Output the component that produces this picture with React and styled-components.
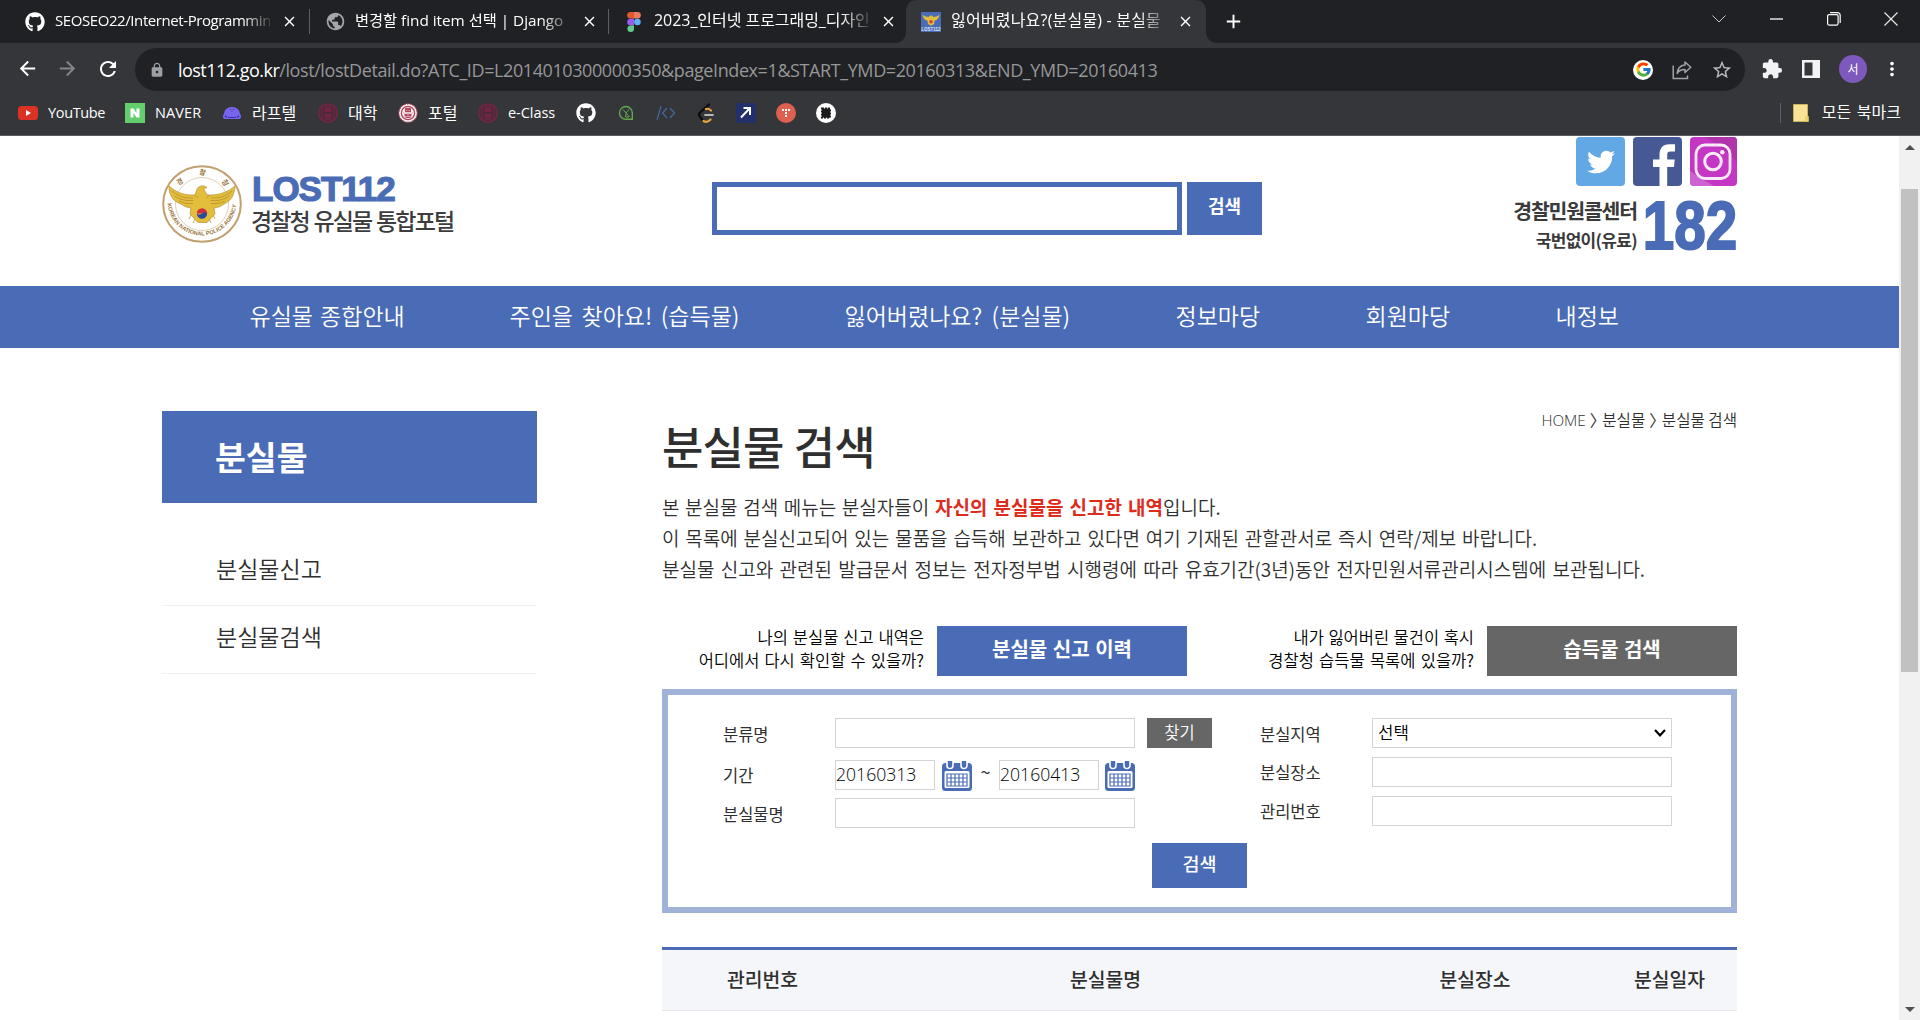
import React from 'react';
import styled, { createGlobalStyle } from 'styled-components';
import { FaGithub, FaTwitter } from 'react-icons/fa';
import { FcGoogle } from 'react-icons/fc';
import { MdArrowBack, MdArrowForward, MdRefresh, MdLock, MdStarBorder, MdExtension, MdMoreVert, MdPublic, MdClose, MdAdd } from 'react-icons/md';

const BLUE = '#4a6bb5';

const Global = createGlobalStyle`
  * { box-sizing: border-box; }
  body { margin: 0; background: #fff; overflow: hidden; font-family: "Noto Sans CJK KR", "Noto Sans", sans-serif; }
  svg { display: block; flex: none; }
`;

const Screen = styled.div`
  width: 1920px;
  height: 1020px;
  overflow: hidden;
  display: flex;
  flex-direction: column;
`;

const Text = styled.span`
  display: block;
  white-space: nowrap;
  flex: none;
  font-size: ${(p) => p.$size}px;
  font-weight: ${(p) => p.$weight || 400};
  letter-spacing: ${(p) => p.$track || 0}px;
  word-spacing: ${(p) => p.$word || 0}px;
  color: ${(p) => p.$color || 'inherit'};
  line-height: ${(p) => p.$line || 'normal'};
`;

const LatinText = styled(Text)`
  font-family: "Open Sans", "Noto Sans", sans-serif;
`;

/* ---------- browser chrome ---------- */

const Chrome = styled.header`
  height: 136px;
  flex: none;
  background: #35363a;
  border-bottom: 1px solid #5d5c60;
  color: #fff;
  font-family: "Open Sans", "Noto Sans CJK KR", sans-serif;
`;

const TabStrip = styled.div`
  height: 43px;
  background: #202124;
  display: flex;
  align-items: stretch;
  padding-left: 10px;
`;

const Tab = styled.div`
  width: ${(p) => p.$width}px;
  display: flex;
  align-items: center;
  padding-left: 15px;
  position: relative;
  flex: none;
  background: ${(p) => (p.$active ? '#35363a' : 'transparent')};
  border-radius: 10px 10px 0 0;
`;

const TabCurve = styled.i`
  position: absolute;
  bottom: 0;
  ${(p) => p.$side}: -10px;
  width: 10px;
  height: 10px;
  background: radial-gradient(circle at ${(p) => (p.$side === 'left' ? '0 0' : '100% 0')}, transparent 9.5px, #35363a 10px);
`;

const TabIcon = styled.div`
  width: 20px;
  display: flex;
  justify-content: center;
  flex: none;
`;

const TabTitle = styled.div`
  width: 215px;
  margin: 0 0 1px 10px;
  overflow: hidden;
  mask-image: linear-gradient(90deg, #000 calc(100% - 28px), rgba(0, 0, 0, 0.15) 100%);
  height: 28px;
`;

const TabClose = styled.div`
  margin-left: 11px;
`;

const TabRule = styled.i`
  width: 1px;
  height: 25px;
  margin-top: 9px;
  background: #5f6064;
  flex: none;
`;

const NewTab = styled.div`
  display: flex;
  align-items: center;
  margin-left: 16px;
`;

const WindowButtons = styled.div`
  margin-left: auto;
  display: flex;
  padding-bottom: 6px;
`;

const WindowButton = styled.div`
  width: 57.3px;
  display: flex;
  align-items: center;
  justify-content: center;
`;

const Toolbar = styled.div`
  height: 53px;
  padding: 5px 0;
  display: flex;
  align-items: center;
`;

const NavButtons = styled.div`
  width: 135px;
  padding: 0 0 2px 16px;
  display: flex;
  gap: 17px;
  flex: none;
`;

const Omnibox = styled.div`
  width: 1610px;
  height: 43px;
  border-radius: 22px;
  background: #202124;
  display: flex;
  align-items: center;
  padding: 0 12px 0 14px;
  flex: none;
`;

const Url = styled.div`
  margin-left: 13px;
  display: flex;
  flex: 1;
`;

const OmniActions = styled.div`
  display: flex;
  align-items: center;
  gap: 19px;
`;

const RoundBadge = styled.div`
  width: 20px;
  height: 20px;
  border-radius: 50%;
  display: flex;
  align-items: center;
  justify-content: center;
  background: #fff;
`;

const Actions = styled.div`
  display: flex;
  align-items: center;
  padding: 0 0 2px 16px;
  gap: 19px;
`;

const Avatar = styled.div`
  width: 28px;
  height: 28px;
  border-radius: 50%;
  background: #7d59bd;
  display: flex;
  align-items: center;
  justify-content: center;
  margin-right: -5px;
`;

const Bookmarks = styled.div`
  height: 34px;
  display: flex;
  align-items: center;
  padding: 0 19px 0 18px;
  gap: 20px;
`;

const Bookmark = styled.div`
  display: flex;
  align-items: center;
  gap: 10px;
  flex: none;
`;

const BookmarkIcon = styled.div`
  width: 20px;
  height: 20px;
  display: flex;
  align-items: center;
  justify-content: center;
  flex: none;
`;

const BookmarkLabel = styled.div`
  width: ${(p) => p.$width}px;
  flex: none;
  padding-bottom: 2px;
`;

const AllBookmarks = styled.div`
  margin-left: auto;
  display: flex;
  align-items: center;
  height: 20px;
  padding-left: 12px;
  border-left: 1px solid #606165;
  gap: 13px;
`;

const AllBookmarksLabel = styled.div`
  padding-bottom: 4px;
`;

/* ---------- page ---------- */

const Viewport = styled.div`
  flex: 1;
  display: flex;
  min-height: 0;
`;

const Page = styled.div`
  width: 1899px;
  flex: none;
  background: #fff;
  color: #2f2f2f;
`;

const Masthead = styled.div`
  height: 150px;
  padding: 0 162px;
  display: flex;
  align-items: flex-start;
`;

const Logo = styled.div`
  width: 550px;
  padding-top: 29px;
  display: flex;
  gap: 9px;
`;

const LogoWords = styled.div`
  padding-top: 5px;
`;

const LogoTitle = styled(Text)`
  font-family: "Liberation Sans", sans-serif;
  height: 33px;
  margin-left: 1px;
  -webkit-text-stroke: 1.2px ${BLUE};
`;

const GlobalSearch = styled.div`
  padding-top: 46px;
  display: flex;
  gap: 5px;
`;

const SearchField = styled.input`
  width: 470px;
  height: 53px;
  border: 5px solid ${BLUE};
  background: #fff;
`;

const Button = styled.button`
  width: ${(p) => p.$width}px;
  height: ${(p) => p.$height}px;
  background: ${(p) => p.$bg || BLUE};
  padding: 0 0 ${(p) => p.$lift || 0}px;
  border: 0;
  color: #fff;
  font-family: inherit;
  display: flex;
  align-items: center;
  justify-content: center;
  flex: none;
`;

const Contact = styled.div`
  margin-left: auto;
  display: flex;
  flex-direction: column;
  align-items: flex-end;
`;

const Socials = styled.div`
  display: flex;
  gap: 8px;
  padding-top: 1px;
`;

const Social = styled.div`
  width: ${(p) => p.$width || 49}px;
  height: 49px;
  border-radius: 4px;
  background: ${(p) => p.$bg};
  display: flex;
  overflow: hidden;
  align-items: center;
  justify-content: center;
`;

const Hotline = styled.div`
  display: flex;
  margin-top: 8px;
`;

const HotlineText = styled.div`
  display: flex;
  flex-direction: column;
  align-items: flex-end;
  padding-top: 1px;
`;

const HotlineNumber = styled(Text)`
  font-family: "Liberation Sans", sans-serif;
  margin-left: -15px;
  transform: scale(0.82, 1);
  transform-origin: right;
  -webkit-text-stroke: 2px ${BLUE};
`;

const MainNav = styled.nav`
  height: 62px;
  background: ${BLUE};
  color: #fff;
  display: flex;
  align-items: center;
  gap: 106px;
  padding: 0 0 5px 249.5px;
`;

const NavItem = styled.div`
  width: ${(p) => p.$width}px;
  flex: none;
`;

const Body = styled.div`
  display: flex;
  padding: 63px 162px 0;
`;

const Sidebar = styled.aside`
  width: 375px;
  margin-right: 125px;
  flex: none;
`;

const SideTitle = styled.div`
  height: 92px;
  background: ${BLUE};
  color: #fff;
  padding: 0 0 3px 53px;
  display: flex;
  align-items: center;
  margin-bottom: 35px;
`;

const SideItem = styled.div`
  height: 68px;
  padding: 0 0 7px 54px;
  display: flex;
  align-items: center;
  border-bottom: 1px solid #f0f0f0;
`;

const Main = styled.main`
  width: 1075px;
  flex: none;
`;

const TitleRow = styled.div`
  height: 80px;
  display: flex;
  justify-content: space-between;
  align-items: flex-start;
`;

const Crumbs = styled.div`
  display: flex;
`;

const CrumbMark = styled.div`
  width: 16.500px;
  padding-left: 4px;
  flex: none;
`;

const Intro = styled.div`
  height: 134px;
`;

const IntroLine = styled.div`
  display: flex;
  height: 31px;
`;

const Shortcuts = styled.div`
  height: 50px;
  display: flex;
  justify-content: space-between;
  margin: 1px 0 13px;
`;

const Shortcut = styled.div`
  display: flex;
  gap: 13px;
  width: 525px;
  justify-content: flex-end;
`;

const ShortcutHint = styled.div`
  display: flex;
  flex-direction: column;
  align-items: flex-end;
  color: #000;
`;

const SearchBox = styled.section`
  height: 224px;
  border: 6px solid #a1b2d8;
  padding-top: 23px;
  display: flex;
  flex-direction: column;
  align-items: center;
  margin-bottom: 34px;
`;

const FormColumns = styled.div`
  width: 100%;
  display: flex;
  height: 110px;
  margin-bottom: 15px;
  padding-left: 55px;
`;

const FormColumn = styled.div`
  width: ${(p) => p.$width}px;
  display: flex;
  flex-direction: column;
  gap: ${(p) => p.$gap}px;
`;

const Field = styled.div`
  display: flex;
  height: 30px;
  align-items: center;
  margin-top: ${(p) => p.$offset || 0}px;
`;

const FieldLabel = styled.div`
  width: 112px;
  flex: none;
  padding-top: ${(p) => p.$drop || 0}px;
`;

const Input = styled.div`
  width: ${(p) => p.$width || 300}px;
  height: 30px;
  border: 1px solid #d4d4d4;
  background: #fff;
  color: #000;
  display: flex;
  align-items: center;
  justify-content: space-between;
  padding: 0 ${(p) => p.$pad || 0}px 3px;
  flex: none;
`;

const CalendarButton = styled.div`
  padding-top: 2px;
  margin-left: ${(p) => p.$gap}px;
`;

const Gap = styled.i`
  width: ${(p) => p.$width}px;
  flex: none;
`;

const Tilde = styled.div`
  width: 27px;
  display: flex;
  justify-content: center;
  padding-bottom: 9px;
  flex: none;
`;

const TableHead = styled.div`
  height: 64px;
  display: grid;
  grid-template-columns: 201px 485px 254px 135px;
  align-items: center;
  justify-items: center;
  padding-bottom: 2px;
  background: #f5f6fa;
  border-top: 3px solid ${BLUE};
  border-bottom: 1px solid #e7e8ec;
`;

const Scrollbar = styled.div`
  width: 21px;
  background: #f1f1f1;
  display: flex;
  flex-direction: column;
  align-items: center;
  justify-content: space-between;
`;

const ScrollTop = styled.div`
  display: flex;
  flex-direction: column;
  align-items: center;
`;

const ScrollArrow = styled.div`
  height: 22px;
  display: flex;
  align-items: center;
`;

const ScrollThumb = styled.div`
  margin-top: 31px;
  width: 17px;
  height: 483px;
  background: #c1c1c1;
`;

/* ---------- drawings ---------- */

const FigmaMark = () => (
  <svg width="14" height="20" viewBox="0 0 14 20">
    <path d="M3.500 0H7v6.600H3.500a3.300 3.300 0 0 1 0-6.600z" fill="#e2592f" />
    <path d="M7 0h3.500a3.300 3.300 0 0 1 0 6.600H7z" fill="#ec7b62" />
    <path d="M3.500 6.700H7v6.600H3.500a3.300 3.300 0 0 1 0-6.600z" fill="#9a5cf0" />
    <circle cx="10.400" cy="10" r="3.300" fill="#5fb0f5" />
    <path d="M3.500 13.400H7v3.300a3.300 3.300 0 1 1-3.500-3.300z" fill="#64c98c" />
  </svg>
);

const LostFavicon = () => (
  <svg width="20" height="20" viewBox="0 0 20 20">
    <rect width="20" height="20" fill="#4a6bb5" />
    <path d="M1.500 2.800c2 1.500 4 2.200 6.200 2.200L9 3.500h2L12.300 5c2.200 0 4.200-.7 6.200-2.200-.3 3-2 5.300-5 6L13 12l-3 1.800L7 12l-.5-3.200c-3-.7-4.700-3-5-6z" fill="#e2bd3c" />
    <circle cx="10" cy="9.800" r="1.700" fill="#d13b3b" />
    <text x="10" y="18.600" fontSize="4.500" textAnchor="middle" fill="#dfe6f5" fontWeight="700" fontFamily="Liberation Sans">LOST112</text>
  </svg>
);

const Seal = ({ light }) => {
  const ink = light ? '#b0455c' : '#7d2344';
  const paper = light ? '#f8f1f3' : '#4b2a3a';
  return (
    <svg width="20" height="20" viewBox="0 0 20 20">
      <circle cx="10" cy="10" r="9.200" fill={paper} stroke={ink} strokeWidth="1.200" strokeDasharray={light ? '1.800 1.200' : 'none'} />
      <circle cx="10" cy="10" r="6.600" fill="none" stroke={ink} strokeWidth={light ? 1.3 : 0.8} />
      <path d="M7 5.500c1-1.200 1.500-.5 3-.5s2-.7 3 .5V9H7zM6.500 11h7v2.500h-7z" fill={ink} />
      <path d="M8 7.500h1.500M10.500 7.500H12M10 9v6M5 10h10" stroke={light ? '#d9a5b0' : '#4b2a3a'} strokeWidth="0.900" />
      <path d="M7.500 14.500h5" stroke={ink} strokeWidth="1" />
    </svg>
  );
};

const Emblem = () => (
  <svg width="80" height="78" viewBox="0 0 80 78">
    <defs>
      <path id="lower" d="M5.500 36A34.500 34.500 0 0 0 74.500 36" />
      <path id="upper" d="M12 39A28 28 0 0 1 68 39" />
    </defs>
    <ellipse cx="40" cy="39" rx="38.800" ry="37.800" fill="#fff" stroke="#c0a070" strokeWidth="2" />
    <circle cx="40" cy="39" r="26.500" fill="none" stroke="#ddcbae" strokeWidth="0.900" />
    <text fontSize="5.600" fontWeight="700" fill="#9a753c" fontFamily="Liberation Sans">
      <textPath href="#lower" startOffset="2.500">KOREAN NATIONAL POLICE AGENCY</textPath>
    </text>
    <text fontSize="7" fontWeight="700" fill="#9a753c" fontFamily="Noto Sans CJK KR" letterSpacing="16">
      <textPath href="#upper" startOffset="18">경찰청</textPath>
    </text>
    <path d="M7 21c8 7 16 9.500 26 9l2-6c2-3.500 7-4 10-1.500l-3.500 1.200 3.500 6.300c10 .5 20-2 28-9-.5 9-4 15-11 18-3 2.500-6 3.500-10 4l1 6-8 8.500h-9l-8-8.500 1-6c-4-.5-7-1.500-10-4C10.500 36 7 30 7 21z" fill="#e3be3d" stroke="#b98f2e" strokeWidth="0.700" />
    <path d="M10 26c7 6 14 7.500 21 7M12.500 31c6 4 12 5 19 4.500M17 36c5 2.500 9 3 14 2.500M70 26c-7 6-14 7.500-21 7M67.500 31c-6 4-12 5-19 4.500M63 36c-5 2.500-9 3-14 2.500M32 30l4 3M48 30l-4 3" fill="none" stroke="#bb9232" strokeWidth="0.900" />
    <path d="M29 50l-2 4M33 54l-2 4M51 50l2 4M47 54l2 4" stroke="#bb9232" strokeWidth="0.800" />
    <path d="M34.800 48.500a5.200 5.200 0 0 1 10.400 0z" fill="#cf2f3c" />
    <path d="M34.800 48.500a5.200 5.200 0 0 0 10.400 0c-2-2-3.500-1-5.200 0s-3.500 1.500-5.200 0z" fill="#2c4a9c" />
  </svg>
);

const Instagram = () => (
  <svg width="47" height="49" viewBox="0 0 47 49">
    <path d="M0 34c8 6 16 10 24 15H0z" fill="#cf62d2" />
    <path d="M14 0h33v26C38 14 26 6 14 0z" fill="#b234ab" />
    <rect x="6" y="8" width="34" height="33.500" rx="9" fill="none" stroke="#fbeafa" strokeWidth="2.800" />
    <circle cx="23" cy="24.500" r="8.300" fill="none" stroke="#fbeafa" strokeWidth="3" />
    <circle cx="32.300" cy="15.200" r="2.200" fill="#fbeafa" />
  </svg>
);

const Facebook = () => (
  <svg width="48" height="49" viewBox="0 0 48 49">
    <path d="M25.500 49V30H19v-7.500h6.500V18c0-7 3.500-10.800 9.500-10.800h6v7.300h-4.500c-2.500 0-3.300 1-3.300 3.500v4.500h7.500L40 30h-6.800v19z" fill="#fff" />
  </svg>
);

const Calendar = () => (
  <svg width="30" height="30" viewBox="0 0 30 30">
    <rect y="2" width="30" height="28" rx="3.500" fill="#4a6bb5" />
    <path d="M5 0v4.500a3 3 0 0 0 6 0V0M19 0v4.500a3 3 0 0 0 6 0V0" fill="#4a6bb5" stroke="#fff" strokeWidth="1.600" />
    <path d="M8 0v5M22 0v5" stroke="#4a6bb5" strokeWidth="3.200" strokeLinecap="round" />
    <rect x="2.500" y="10" width="25" height="17" rx="1.500" fill="#fff" />
    <path d="M5 13h20v12H5zM5 17h20M5 21h20M9 13v12M13 13v12M17 13v12M21 13v12" fill="none" stroke="#4a6bb5" strokeWidth="1.200" />
  </svg>
);

const ShareIcon = () => (
  <svg width="20" height="20" viewBox="0 0 20 20" fill="none" stroke="#9fa2a6" strokeWidth="1.500">
    <path d="M1.200 5.500v13H15.500V15.500" />
    <path d="M13 2l5.800 5.200L13 12.500V9.500c-4 0-6.500 1.300-7.800 4C5.500 9 8 5.500 13 5z" strokeLinejoin="round" />
  </svg>
);

const bookmarks = [
  { w: 57, t: 'YouTube', s: 14.5, k: -0.35, i: <svg width="20" height="16" viewBox="0 0 20 16"><rect y="1" width="20" height="14" rx="3.500" fill="#dc3224" /><path d="M8 5l5 3-5 3z" fill="#fff" /></svg> },
  { w: 47, t: 'NAVER', s: 14.5, k: 0.1, i: <svg width="20" height="20" viewBox="0 0 20 20"><rect width="20" height="20" fill="#62cf6c" /><path d="M5.500 5.500h3l3 4.500V5.500h3v9h-3l-3-4.500v4.500h-3z" fill="#fff" /></svg> },
  { w: 46, t: '라프텔', s: 16, i: <svg width="20" height="20" viewBox="0 0 20 20"><path d="M2 11C2.500 6 6 4 10 4s7.500 2 8 7c1.800 1.500 1.300 5-1 5H3c-2.300 0-2.800-3.500-1-5z" fill="#7765ee" /><path d="M8 6.500h1M11 6.500h1M9.500 8h1M6 14.500h8M3 12.500l2 2M17 12.500l-2 2" stroke="#3c2fa5" strokeWidth="1.100" /></svg> },
  { w: 30, t: '대학', s: 16, i: <Seal /> },
  { w: 30, t: '포털', s: 16, i: <Seal light /> },
  { w: 48, t: 'e-Class', s: 14.5, k: -0.05, i: <Seal /> },
  { i: <FaGithub size={20} color="#fff" /> },
  { i: <svg width="16" height="16" viewBox="0 0 16 16" fill="none" stroke="#62a84c" strokeWidth="1.400"><path d="M14.300 14.300H8A6.400 6.400 0 1 1 14.300 8z" /><path d="M5 4.500l6.500 7.500M8 8l3-3.500M8 8.500L7.500 12H11" strokeWidth="1" /></svg> },
  { i: <svg width="20" height="16" viewBox="0 0 20 16" fill="none" stroke="#45699f" strokeWidth="1.200"><path d="M1 15L5 1M11 3L6.500 8l4.500 5M14 3l4.500 5-4.500 5" /></svg> },
  { i: <svg width="18" height="20" viewBox="0 0 18 20" fill="none" strokeWidth="2.200" strokeLinecap="round"><path d="M12 1.500L3 9.500c-1.500 1.500-1 3.500 0 4.500l3.500 4" stroke="#0c0c0c" /><path d="M6.500 18c2.500 1.500 5 .8 7-1.500M9 6c2-.8 3-.3 5 1.500" stroke="#e6a23a" /><path d="M8 12h8" stroke="#b7b7b7" strokeWidth="1.800" /></svg> },
  { i: <svg width="20" height="20" viewBox="0 0 20 20"><rect width="20" height="20" rx="3" fill="#23306b" /><path d="M5 14.500L14 5M7.500 5H14v7" fill="none" stroke="#fff" strokeWidth="2" /></svg> },
  { i: <svg width="20" height="20" viewBox="0 0 20 20"><circle cx="10" cy="10" r="10" fill="#e0604f" /><path d="M6 7h2M9 7h2M12 7h2M9 10h2M9 13h2" stroke="#fff" strokeWidth="1.900" /></svg> },
  { i: <svg width="20" height="20" viewBox="0 0 20 20"><circle cx="10" cy="10" r="10" fill="#fff" /><rect x="6" y="5.500" width="8" height="9" fill="#1c1c1c" stroke="#1c1c1c" strokeWidth="2" strokeDasharray="2 1" /></svg> },
];

const tabs = [
  { t: 'SEOSEO22/Internet-Programmin', s: 15, k: -0.42, w: 299, i: <FaGithub size={20} color="#fff" /> },
  { t: '변경할 find item 선택 | Django', s: 15.3, k: -0.02, w: 298, i: <MdPublic size={21} color="#a2a5a9" /> },
  { t: '2023_인터넷 프로그래밍_디자인', s: 16, k: -0.05, w: 297, i: <FigmaMark /> },
  { t: '잃어버렸나요?(분실물) - 분실물', s: 16, k: 0.2, w: 300, active: true, i: <LostFavicon /> },
];

const menu = [
  { t: '유실물 종합안내', w: 154, word: 2 },
  { t: '주인을 찾아요! (습득물)', w: 229, word: 3.4 },
  { t: '잃어버렸나요? (분실물)', w: 225, word: 4.2 },
  { t: '정보마당', w: 84 },
  { t: '회원마당', w: 84 },
  { t: '내정보', w: 64 },
];

const columns = ['관리번호', '분실물명', '분실장소', '분실일자'];

export default function App() {
  return (
    <Screen>
      <Global />
      <Chrome>
        <TabStrip>
          {tabs.map((tab, i) => (
            <React.Fragment key={tab.t}>
              <Tab $width={tab.w} $active={tab.active}>
                {tab.active && <><TabCurve $side="left" /><TabCurve $side="right" /></>}
                <TabIcon>{tab.i}</TabIcon>
                <TabTitle><Text $size={tab.s} $track={tab.k} $line="27px">{tab.t}</Text></TabTitle>
                <TabClose><MdClose size={17} /></TabClose>
              </Tab>
              {i < 2 && <TabRule />}
            </React.Fragment>
          ))}
          <NewTab><MdAdd size={23} /></NewTab>
          <WindowButtons>
            <WindowButton><svg width="14" height="8" viewBox="0 0 14 8" fill="none" stroke="#c8c8c8"><path d="M.5 .5L7 7l6.500-6.500" /></svg></WindowButton>
            <WindowButton><svg width="13" height="2" viewBox="0 0 13 2"><path d="M0 1h13" stroke="#fff" strokeWidth="1.300" /></svg></WindowButton>
            <WindowButton><svg width="14" height="14" viewBox="0 0 14 14" fill="none" stroke="#fff" strokeWidth="1.200"><rect x=".6" y="2.600" width="10.500" height="10.500" rx="1.500" /><path d="M3 .7h7.500a2.700 2.700 0 0 1 2.700 2.700V11" /></svg></WindowButton>
            <WindowButton><svg width="14" height="14" viewBox="0 0 14 14" stroke="#e8e8e8" strokeWidth="1.200"><path d="M.5 .5l13 13M13.500 .5l-13 13" /></svg></WindowButton>
          </WindowButtons>
        </TabStrip>
        <Toolbar>
          <NavButtons>
            <MdArrowBack size={23} />
            <MdArrowForward size={23} color="#85868a" />
            <MdRefresh size={24} />
          </NavButtons>
          <Omnibox>
            <MdLock size={16} color="#9aa0a6" />
            <Url>
              <Text $size={18} $track={-0.53}>lost112.go.kr</Text>
              <Text $size={18} $track={-0.41} $color="#969799">/lost/lostDetail.do?ATC_ID=L2014010300000350&amp;pageIndex=1&amp;START_YMD=20160313&amp;END_YMD=20160413</Text>
            </Url>
            <OmniActions>
              <RoundBadge><FcGoogle size={17} /></RoundBadge>
              <ShareIcon />
              <MdStarBorder size={22} color="#b9bbbe" />
            </OmniActions>
          </Omnibox>
          <Actions>
            <MdExtension size={22} color="#f1f3f4" />
            <svg width="18" height="18" viewBox="0 0 18 18"><path d="M0 0h18v18H0zM2.500 2.500v13h8v-13z" fillRule="evenodd" fill="#f1f3f4" /></svg>
            <Avatar><Text $size={12}>서</Text></Avatar>
            <MdMoreVert size={22} />
          </Actions>
        </Toolbar>
        <Bookmarks>
          {bookmarks.map((b, i) => (
            <Bookmark key={i}>
              <BookmarkIcon>{b.i}</BookmarkIcon>
              {b.t && <BookmarkLabel $width={b.w}><Text $size={b.s} $track={b.k}>{b.t}</Text></BookmarkLabel>}
            </Bookmark>
          ))}
          <AllBookmarks>
            <svg width="16" height="18" viewBox="0 0 16 18"><path d="M.5 .5h14v12h1v5H.5z" fill="#f8e295" stroke="#d9bd58" strokeWidth=".8" /><path d="M12 12.500h3v5h-3z" fill="#ecd068" /></svg>
            <AllBookmarksLabel><Text $size={16} $word={1.5}>모든 북마크</Text></AllBookmarksLabel>
          </AllBookmarks>
        </Bookmarks>
      </Chrome>

      <Viewport>
        <Page>
          <Masthead>
            <Logo>
              <Emblem />
              <LogoWords>
                <LogoTitle $size={35} $weight={700} $track={-1} $color={BLUE} $line="38px">LOST112</LogoTitle>
                <Text $size={23} $weight={500} $track={-1.9} $word={1.5} $color="#3d3d3f" $line="34px">경찰청 유실물 통합포털</Text>
              </LogoWords>
            </Logo>
            <GlobalSearch>
              <SearchField aria-label="통합검색" />
              <Button $width={75} $height={53} $lift={8}><Text $size={18} $weight={700}>검색</Text></Button>
            </GlobalSearch>
            <Contact>
              <Socials>
                <Social $bg="#62a8e5"><FaTwitter size={28} color="#fff" /></Social>
                <Social $bg="#475995" $width={49}><Facebook /></Social>
                <Social $bg="#c437c4" $width={47}><Instagram /></Social>
              </Socials>
              <Hotline>
                <HotlineText>
                  <Text $size={20.5} $weight={700} $track={-1.2} $color="#3a3a3a" $line="30px">경찰민원콜센터</Text>
                  <Text $size={17} $weight={700} $track={-0.7} $color="#3a3a3a" $line="29px">국번없이(유료)</Text>
                </HotlineText>
                <HotlineNumber $size={69} $weight={700} $color={BLUE} $line="64px">182</HotlineNumber>
              </Hotline>
            </Contact>
          </Masthead>

          <MainNav>
            {menu.map((m) => <NavItem key={m.t} $width={m.w}><Text $size={23} $weight={350} $word={m.word}>{m.t}</Text></NavItem>)}
          </MainNav>

          <Body>
            <Sidebar>
              <SideTitle><Text $size={33.5} $weight={700}>분실물</Text></SideTitle>
              <SideItem><Text $size={23} $weight={350}>분실물신고</Text></SideItem>
              <SideItem><Text $size={23} $weight={350}>분실물검색</Text></SideItem>
            </Sidebar>
            <Main>
              <TitleRow>
                <Text $size={45} $weight={500} $track={-0.9} $word={1} $line="70px">분실물 검색</Text>
                <Crumbs>
                  <LatinText $size={15.3} $weight={300} $line="18px">HOME</LatinText>
                  <CrumbMark><Text $size={16} $line="17px">〉</Text></CrumbMark>
                  <Text $size={15.6} $weight={350} $line="17px">분실물</Text>
                  <CrumbMark><Text $size={16} $line="17px">〉</Text></CrumbMark>
                  <Text $size={15.6} $weight={350} $line="17px">분실물 검색</Text>
                </Crumbs>
              </TitleRow>
              <Intro>
                <IntroLine>
                  <Text $size={19} $weight={350} $word={1.4} $line="31px">본 분실물 검색 메뉴는 분실자들이&nbsp;</Text>
                  <Text $size={19} $weight={700} $word={1.8} $color="#dd2b1c" $line="31px">자신의 분실물을 신고한 내역</Text>
                  <Text $size={19} $weight={350} $line="31px">입니다.</Text>
                </IntroLine>
                <IntroLine><Text $size={19} $weight={350} $word={1.6} $line="31px">이 목록에 분실신고되어 있는 물품을 습득해 보관하고 있다면 여기 기재된 관할관서로 즉시 연락/제보 바랍니다.</Text></IntroLine>
                <IntroLine><Text $size={19} $weight={350} $word={2.1} $line="31px">분실물 신고와 관련된 발급문서 정보는 전자정부법 시행령에 따라 유효기간(3년)동안 전자민원서류관리시스템에 보관됩니다.</Text></IntroLine>
              </Intro>
              <Shortcuts>
                <Shortcut>
                  <ShortcutHint>
                    <Text $size={16.5} $weight={350} $word={1.2} $line="23px">나의 분실물 신고 내역은</Text>
                    <Text $size={16.5} $weight={350} $word={1.4} $line="23px">어디에서 다시 확인할 수 있을까?</Text>
                  </ShortcutHint>
                  <Button $width={250} $height={50} $lift={5}><Text $size={20} $weight={700} $word={1}>분실물 신고 이력</Text></Button>
                </Shortcut>
                <Shortcut>
                  <ShortcutHint>
                    <Text $size={16.5} $weight={350} $word={0.8} $line="23px">내가 잃어버린 물건이 혹시</Text>
                    <Text $size={16.5} $weight={350} $word={1.6} $line="23px">경찰청 습득물 목록에 있을까?</Text>
                  </ShortcutHint>
                  <Button $width={250} $height={50} $lift={5} $bg="#666"><Text $size={20} $weight={700} $word={1}>습득물 검색</Text></Button>
                </Shortcut>
              </Shortcuts>
              <SearchBox>
                <FormColumns>
                  <FormColumn $width={537} $gap={0}>
                    <Field>
                      <FieldLabel $drop={2}><Text $size={16.5}>분류명</Text></FieldLabel>
                      <Input />
                      <Gap $width={12} />
                      <Button $width={65} $height={30} $lift={3} $bg="#666"><Text $size={16.5} $weight={350}>찾기</Text></Button>
                    </Field>
                    <Field $offset={12}>
                      <FieldLabel><Text $size={16.5}>기간</Text></FieldLabel>
                      <Input $width={100}><LatinText $size={17.6} $weight={300}>20160313</LatinText></Input>
                      <CalendarButton $gap={7}><Calendar /></CalendarButton>
                      <Tilde><Text $size={18}>~</Text></Tilde>
                      <Input $width={100}><LatinText $size={17.6} $weight={300}>20160413</LatinText></Input>
                      <CalendarButton $gap={6}><Calendar /></CalendarButton>
                    </Field>
                    <Field $offset={8}>
                      <FieldLabel $drop={2}><Text $size={16.5}>분실물명</Text></FieldLabel>
                      <Input />
                    </Field>
                  </FormColumn>
                  <FormColumn $width={420} $gap={9}>
                    <Field>
                      <FieldLabel $drop={2}><Text $size={16.5}>분실지역</Text></FieldLabel>
                      <Input $pad={5}>
                        <Text $size={16.8} $weight={350}>선택</Text>
                        <svg width="12" height="3" viewBox="0 0 12 3" overflow="visible"><path d="M1 0l5 5.300 5-5.300" fill="none" stroke="#000" strokeWidth="2.200" /></svg>
                      </Input>
                    </Field>
                    <Field><FieldLabel><Text $size={16.5}>분실장소</Text></FieldLabel><Input /></Field>
                    <Field><FieldLabel><Text $size={16.5}>관리번호</Text></FieldLabel><Input /></Field>
                  </FormColumn>
                </FormColumns>
                <Button $width={95} $height={45} $lift={6}><Text $size={18.5} $weight={500}>검색</Text></Button>
              </SearchBox>
              <TableHead>
                {columns.map((c) => <Text key={c} $size={19.3} $weight={500}>{c}</Text>)}
              </TableHead>
            </Main>
          </Body>
        </Page>
        <Scrollbar>
          <ScrollTop>
            <ScrollArrow><svg width="10" height="5" viewBox="0 0 10 5"><path d="M0 5l5-5 5 5z" fill="#505050" /></svg></ScrollArrow>
            <ScrollThumb />
          </ScrollTop>
          <ScrollArrow><svg width="10" height="5" viewBox="0 0 10 5"><path d="M0 0l5 5 5-5z" fill="#505050" /></svg></ScrollArrow>
        </Scrollbar>
      </Viewport>
    </Screen>
  );
}
